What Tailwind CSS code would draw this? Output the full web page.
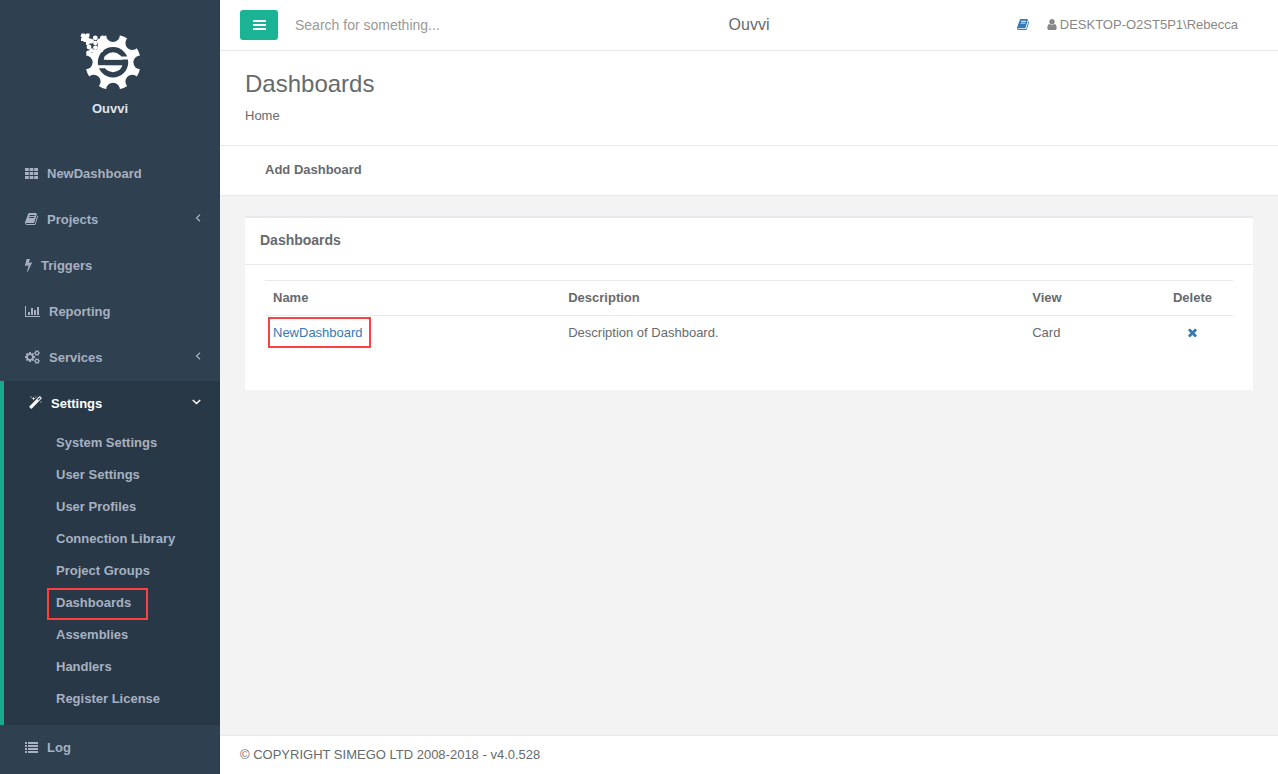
<!DOCTYPE html>
<html lang="en">
<head>
<meta charset="utf-8">
<meta name="viewport" content="width=device-width, initial-scale=1">
<title>Dashboards - Ouvvi</title>
<script src="https://cdn.jsdelivr.net/npm/@tailwindcss/browser@4"></script>
</head>
<body class="flex min-h-screen bg-[#2f4050] font-['Liberation_Sans',Arial,sans-serif] text-[13px] leading-[18px] text-[#676a6c]">

<nav class="w-[220px] shrink-0 font-bold text-[#a7b1c2]" aria-label="Main">
  <div class="flex h-[151px] flex-col items-center pt-8 text-[#dfe4ed]">
    <svg class="h-[60px] w-[64px]" viewBox="78 32 64 60" aria-hidden="true">
      <circle cx="113" cy="62.300" r="27.800" fill="#fff"/>
      <g fill="#2f4050">
        <!-- gaps between the gear teeth -->
        <circle cx="113" cy="35" r="6.900"/>
        <circle cx="132.300" cy="43" r="6.900"/>
        <circle cx="140.300" cy="62.300" r="6.900"/>
        <circle cx="132.300" cy="81.600" r="6.900"/>
        <circle cx="113" cy="89.600" r="6.900"/>
        <circle cx="93.700" cy="81.600" r="6.900"/>
        <circle cx="85.700" cy="62.300" r="6.900"/>
        <path d="M80 32h20v10l-2 2v5l-6 4H80z"/>
        <circle cx="113" cy="62.300" r="15.200"/>
      </g>
      <g fill="#fff">
        <!-- scattered pixels at the corner of the gear -->
        <path d="M81.500 33.500h3l1 1 1-1h3v3l-1 1 1 1h2v2l1 1v2h-3l-1 1.500h-2.500v-3h-2l-1-1h-2v-2.500l1-1-1.500-1z"/>
        <circle cx="95.300" cy="37.800" r="2.400"/>
        <circle cx="92" cy="41" r="2"/>
        <circle cx="95.300" cy="43" r="2.200"/>
        <circle cx="89" cy="47" r="2.400"/>
        <circle cx="95.300" cy="47.700" r="2.200"/>
        <circle cx="91.500" cy="50.500" r="2.200"/>
        <circle cx="88.500" cy="52.800" r="2.400"/>
        <circle cx="102.500" cy="38" r="2.400"/>
        <circle cx="99.500" cy="41" r="2.600"/>
        <path d="M98 43h5v9h-7l-3 6-5-3v-2h5v-3h4z"/>
      </g>
      <circle cx="113" cy="62.300" r="10" fill="#fff"/>
      <path fill="#2f4050" d="M98.500 59.700H122l3 2.500-3 3.100H104l-5-2z"/>
      <path fill="#fff" d="M104 56.600h24v3h-22zM98 65.300h24l-1.500 3H98z"/>
      <path fill="#2f4050" d="M104.500 54.500q-4 5 1 5.800h15q7 0 7.400 4l-5.400 5.500q2-4-1-4.500h-15q-7 0-8.400-3.500z"/>
    </svg>
    <span class="mt-2">Ouvvi</span>
  </div>

  <ul>
    <li><a href="#" class="flex h-[46px] items-center gap-[9px] pl-[25px]">
      <svg class="mb-0.5 h-3.5 w-[13px]" viewBox="0 0 13 14" fill="currentColor" aria-hidden="true"><path d="M0 2h3.800v3H0zM4.600 2h3.800v3H4.600zM9.200 2H13v3H9.200zM0 6h3.800v3H0zM4.600 6h3.800v3H4.600zM9.200 6H13v3H9.200zM0 10h3.800v3H0zM4.600 10h3.800v3H4.600zM9.200 10H13v3H9.200z"/></svg>
      NewDashboard</a></li>
    <li><a href="#" class="flex h-[46px] items-center gap-[9px] pl-[25px]">
      <svg class="mb-0.5 h-3.5 w-[13px]" viewBox="64 0 1664 1792" fill="currentColor" aria-hidden="true"><path id="book" d="M1703 478q40 57 18 129l-275 906q-19 64-76.500 107.500t-122.500 43.500h-923q-77 0-148.500-53.500t-99.500-131.500q-24-67-2-127 0-4 3-27t4-37q1-8-3-21.500t-3-19.500q2-11 8-21t16.500-23.500 16.500-23.500q23-38 45-91.500t30-91.500q3-10 .5-30t-.5-28q3-11 17-28t17-23q21-36 42-92t25-90q1-9-2.500-32t.5-28q4-13 22-30.500t22-22.500q19-26 42.500-84.500t27.500-96.500q1-8-3-25.500t-2-26.500q2-8 9-18t18-23 17-21q8-12 16.500-30.500t15-35 16-36 19.500-32 26.500-23.500 36-11.500 47.500 5.500l-1 3q38-9 51-9h761q74 0 114 56t18 130l-274 906q-36 119-71.500 153.500t-128.500 34.500h-869q-27 0-38 15-11 16-1 43 24 70 144 70h923q29 0 56-15.500t35-41.500l300-987q7-22 5-57 38 15 59 43zm-1064 2q-4 13 2 22.500t20 9.500h608q13 0 25.500-9.500t16.500-22.500l21-64q4-13-2-22.500t-20-9.500h-608q-13 0-25.500 9.500t-16.500 22.500zm-83 256q-4 13 2 22.500t20 9.500h608q13 0 25.500-9.500t16.500-22.500l21-64q4-13-2-22.500t-20-9.500h-608q-13 0-25.500 9.500t-16.500 22.500z"/></svg>
      Projects
      <svg class="mr-[19px] mb-1 ml-auto h-2 w-1.5" viewBox="0 0 6 8" fill="none" stroke="currentColor" stroke-width="1.200" aria-hidden="true"><path d="M5 .7 1.500 4 5 7.300"/></svg></a></li>
    <li><a href="#" class="flex h-[46px] items-center gap-[9px] pl-[25px]">
      <svg class="mb-0.5 h-3.5 w-[7px]" viewBox="448 0 896 1792" fill="currentColor" aria-hidden="true"><path d="M1333 566q18 20 7 44l-540 1157q-13 25-42 25-4 0-14-2-17-5-25.500-19t-4.500-30l197-808-406 101q-4 1-12 1-18 0-31-11-18-15-13-39l201-825q4-16 18-26.500t32-10.500h328q19 0 32 12.500t13 29.500q0 8-5 18l-171 463 396-98q8-2 12-2 19 0 34 15z"/></svg>
      Triggers</a></li>
    <li><a href="#" class="flex h-[46px] items-center gap-[9px] pl-[25px]">
      <svg class="mb-0.5 h-3.5 w-[15px]" viewBox="0 0 15 14" fill="currentColor" aria-hidden="true"><path d="M0 2h1v10h14v1H0zM3 8h2v3H3zM6 4h2v7H6zM9 6h2v5H9zM12 3h2v8h-2z"/></svg>
      Reporting</a></li>
    <li><a href="#" class="flex h-[46px] items-center gap-[9px] pl-[25px]">
      <svg class="mb-0.5 h-3.5 w-[15px]" viewBox="0 0 1920 1792" fill="currentColor" aria-hidden="true"><path d="M896 896q0-106-75-181t-181-75-181 75-75 181 75 181 181 75 181-75 75-181zm768 512q0-52-38-90t-90-38-90 38-38 90q0 53 37.500 90.500t90.500 37.500 90.500-37.500 37.500-90.500zm0-1024q0-52-38-90t-90-38-90 38-38 90q0 53 37.500 90.500t90.500 37.500 90.500-37.500 37.500-90.500zm-384 421v185q0 10-7 19.500t-16 10.500l-155 24q-11 35-32 76 34 48 90 115 7 11 7 20 0 12-7 19-23 30-82.500 89.500t-78.500 59.500q-11 0-21-7l-115-90q-37 19-77 31-11 108-23 155-7 24-30 24h-186q-11 0-20-7.500t-10-17.500l-23-153q-34-10-75-31l-118 89q-7 7-20 7-11 0-21-8-144-133-144-160 0-9 7-19 10-14 41-53t47-61q-23-44-35-82l-152-24q-10-1-17-9.500t-7-19.500v-185q0-10 7-19.500t16-10.500l155-24q11-35 32-76-34-48-90-115-7-11-7-20 0-12 7-20 22-30 82-89t79-59q11 0 21 7l115 90q34-18 77-32 11-108 23-154 7-24 30-24h186q11 0 20 7.500t10 17.500l23 153q34 10 75 31l118-89q8-7 20-7 11 0 21 8 144 133 144 160 0 8-7 19-12 16-42 54t-45 60q23 48 34 82l152 23q10 2 17 10.500t7 19.500zm640 533v140q0 16-149 31-12 27-30 52 51 113 51 138 0 4-4 7-122 71-124 71-8 0-46-47t-52-68q-20 2-30 2t-30-2q-14 21-52 68t-46 47q-2 0-124-71-4-3-4-7 0-25 51-138-18-25-30-52-149-15-149-31v-140q0-16 149-31 13-29 30-52-51-113-51-138 0-4 4-7 4-2 35-20t59-34 30-16q8 0 46 46.500t52 67.500q20-2 30-2t30 2q51-71 92-112l6-2q4 0 124 70 4 3 4 7 0 25-51 138 17 23 30 52 149 15 149 31zm0-1024v140q0 16-149 31-12 27-30 52 51 113 51 138 0 4-4 7-122 71-124 71-8 0-46-47t-52-68q-20 2-30 2t-30-2q-14 21-52 68t-46 47q-2 0-124-71-4-3-4-7 0-25 51-138-18-25-30-52-149-15-149-31v-140q0-16 149-31 13-29 30-52-51-113-51-138 0-4 4-7 4-2 35-20t59-34 30-16q8 0 46 46.500t52 67.500q20-2 30-2t30 2q51-71 92-112l6-2q4 0 124 70 4 3 4 7 0 25-51 138 17 23 30 52 149 15 149 31z"/></svg>
      Services
      <svg class="mr-[19px] mb-1 ml-auto h-2 w-1.5" viewBox="0 0 6 8" fill="none" stroke="currentColor" stroke-width="1.200" aria-hidden="true"><path d="M5 .7 1.500 4 5 7.300"/></svg></a></li>
    <li class="border-l-4 border-[#19aa8d] bg-[#293846] pb-2.5">
      <a href="#" class="flex h-[46px] items-center gap-[9px] pl-[25px] text-white">
      <svg class="mb-0.5 h-3.5 w-[13px]" viewBox="64 0 1664 1792" fill="currentColor" aria-hidden="true"><path d="M1254 581l293-293-107-107-293 293zm447-293q0 27-18 45l-1286 1286q-18 18-45 18t-45-18l-198-198q-18-18-18-45t18-45l1286-1286q18-18 45-18t45 18l198 198q18 18 18 45zm-1351-190l98 30-98 30-30 98-30-98-98-30 98-30 30-98zm350 162l196 60-196 60-60 196-60-196-196-60 196-60 60-196zm930 478l98 30-98 30-30 98-30-98-98-30 98-30 30-98zm-640-640l98 30-98 30-30 98-30-98-98-30 98-30 30-98z"/></svg>
      Settings
      <svg class="mr-[19px] mb-1 ml-auto h-1.5 w-[9px]" viewBox="0 0 9 6" fill="none" stroke="currentColor" stroke-width="1.500" aria-hidden="true"><path d="M.8 1 4.500 4.500 8.200 1"/></svg></a>
      <ul>
        <li><a href="#" class="flex h-8 items-center pl-[52px]">System Settings</a></li>
        <li><a href="#" class="flex h-8 items-center pl-[52px]">User Settings</a></li>
        <li><a href="#" class="flex h-8 items-center pl-[52px]">User Profiles</a></li>
        <li><a href="#" class="flex h-8 items-center pl-[52px]">Connection Library</a></li>
        <li><a href="#" class="flex h-8 items-center pl-[52px]">Project Groups</a></li>
        <li class="relative"><a href="#" class="flex h-8 items-center pl-[52px]" aria-current="page">Dashboards</a>
          <span class="pointer-events-none absolute top-px left-[43px] h-8 w-[101px] border-2 border-[#fb4141]"></span></li>
        <li><a href="#" class="flex h-8 items-center pl-[52px]">Assemblies</a></li>
        <li><a href="#" class="flex h-8 items-center pl-[52px]">Handlers</a></li>
        <li><a href="#" class="flex h-8 items-center pl-[52px]">Register License</a></li>
      </ul>
    </li>
    <li><a href="#" class="flex h-[46px] items-center gap-[9px] pl-[25px]">
      <svg class="mb-0.5 h-3.5 w-[13px]" viewBox="0 0 13 14" fill="currentColor" aria-hidden="true"><path d="M0 2h2v2H0zM3 2h10v2H3zM0 5h2v2H0zM3 5h10v2H3zM0 8h2v2H0zM3 8h10v2H3zM0 11h2v2H0zM3 11h10v2H3z"/></svg>
      Log</a></li>
  </ul>
</nav>

<div class="flex min-w-0 flex-1 flex-col bg-[#f3f3f4]">
  <header class="grid h-[51px] grid-cols-[1fr_auto_1fr] items-center border-b border-[#e7eaec] bg-white px-5">
    <div class="flex items-center">
      <button type="button" class="flex h-[30px] w-[38px] items-center justify-center rounded-[3px] bg-[#1ab394] text-white" aria-label="Toggle menu">
        <svg class="h-2.5 w-[13px]" viewBox="0 0 13 10" fill="currentColor" aria-hidden="true"><path d="M0 0h13v2H0zM0 4h13v2H0zM0 8h13v2H0z"/></svg>
      </button>
      <input type="text" aria-label="Search" placeholder="Search for something..." class="ml-[17px] w-[200px] bg-transparent text-sm outline-none placeholder:text-[#999]">
    </div>
    <span class="text-base">Ouvvi</span>
    <div class="mr-5 flex items-center justify-end text-[#888]">
      <a href="#" class="mr-[18px] mb-0.5 text-[#337ab7]" aria-label="Documentation"><svg class="h-[13px] w-3" viewBox="64 0 1664 1792" fill="currentColor" aria-hidden="true"><use href="#book"/></svg></a>
      <a href="#" class="flex items-center gap-[3px]"><svg class="mb-0.5 h-[13px] w-[10px]" viewBox="256 0 1280 1792" fill="currentColor" aria-hidden="true"><path d="M1536 1399q0 109-62.500 187t-150.500 78h-854q-88 0-150.500-78t-62.500-187q0-85 8.500-160.500t31.500-152 58.500-131 94-89 134.500-34.500q131 128 313 128t313-128q76 0 134.500 34.500t94 89 58.500 131 31.500 152 8.500 160.500zm-256-887q0 159-112.500 271.500t-271.500 112.500-271.500-112.500-112.500-271.500 112.500-271.500 271.500-112.500 271.500 112.500 112.500 271.500z"/></svg>DESKTOP-O2ST5P1\Rebecca</a>
    </div>
  </header>

  <div class="border-b border-[#e7eaec] bg-white px-[25px] py-5">
    <h1 class="text-2xl leading-[26px]">Dashboards</h1>
    <a href="#" class="mt-2.5 block">Home</a>
  </div>

  <div class="flex h-[50px] items-center border-b border-[#e7eaec] bg-white px-[45px] pb-0.5 font-bold">
    <a href="#">Add Dashboard</a>
  </div>

  <main class="flex-1 px-[25px] pt-5">
    <section class="border-t-2 border-[#e7eaec] bg-white">
      <h2 class="flex h-[47px] items-center border-b border-[#e7eaec] px-[15px] pb-0.5 text-sm font-bold">Dashboards</h2>
      <div class="px-5 pt-[15px] pb-10">
        <table class="w-full table-fixed border-collapse text-left">
          <thead>
            <tr class="border-t border-[#e7eaec]">
              <th class="w-[30.5%] px-2 py-2">Name</th>
              <th class="px-2 py-2">Description</th>
              <th class="w-[13.2%] px-2 py-2">View</th>
              <th class="w-[81px] px-2 py-2 text-center">Delete</th>
            </tr>
          </thead>
          <tbody>
            <tr class="border-t border-[#e7eaec]">
              <td class="relative px-2 py-2"><a href="#" class="text-[#337ab7]">NewDashboard</a>
                <span class="pointer-events-none absolute top-px left-[3px] h-[31px] w-[103px] border-2 border-[#fb4141]"></span></td>
              <td class="px-2 py-2">Description of Dashboard.</td>
              <td class="px-2 py-2">Card</td>
              <td class="px-2 py-2"><button type="button" class="mx-auto mb-0.5 block text-[#337ab7]" aria-label="Delete NewDashboard"><svg class="h-[13px] w-[13px]" viewBox="0 0 1792 1792" fill="currentColor" aria-hidden="true"><path d="M1490 1322q0 40-28 68l-136 136q-28 28-68 28t-68-28l-294-294-294 294q-28 28-68 28t-68-28l-136-136q-28-28-28-68t28-68l294-294-294-294q-28-28-28-68t28-68l136-136q28-28 68-28t68 28l294 294 294-294q28-28 68-28t68 28l136 136q28 28 28 68t-28 68l-294 294 294 294q28 28 28 68z"/></svg></button></td>
            </tr>
          </tbody>
        </table>
      </div>
    </section>
  </main>

  <footer class="border-t border-[#e7eaec] bg-white px-5 py-[10px]">© COPYRIGHT SIMEGO LTD 2008-2018 - v4.0.528</footer>
</div>
</body>
</html>
